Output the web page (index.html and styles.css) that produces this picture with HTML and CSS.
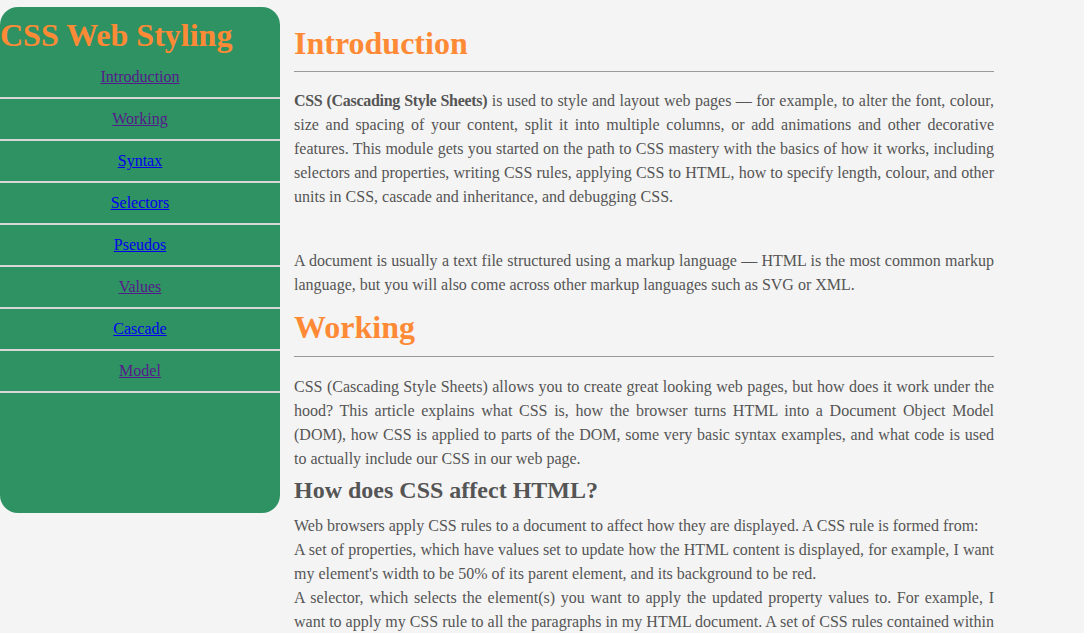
FILE: index.html
```html
<!DOCTYPE html>
<html lang="en">
<head>
<meta charset="utf-8">
<title>CSS Web Styling</title>
<link rel="stylesheet" href="styles.css">
</head>
<body>
<div class="page">
  <nav class="sidebar">
    <h1 class="brand">CSS Web Styling</h1>
    <ul class="nav">
      <li><a class="visited" href="#introduction">Introduction</a></li>
      <li><a class="visited" href="#working">Working</a></li>
      <li><a href="#syntax">Syntax</a></li>
      <li><a href="#selectors">Selectors</a></li>
      <li><a href="#pseudos">Pseudos</a></li>
      <li><a class="visited" href="#values">Values</a></li>
      <li><a href="#cascade">Cascade</a></li>
      <li><a class="visited" href="#model">Model</a></li>
    </ul>
  </nav>
  <main class="content">
    <section class="section" id="introduction">
      <h1 class="title">Introduction</h1>
      <hr class="rule">
      <p class="text text-tight"><strong>CSS (Cascading Style Sheets)</strong> is used to style and layout web pages — for example, to alter the font, colour, size and spacing of your content, split it into multiple columns, or add animations and other decorative features. This module gets you started on the path to CSS mastery with the basics of how it works, including selectors and properties, writing CSS rules, applying CSS to HTML, how to specify length, colour, and other units in CSS, cascade and inheritance, and debugging CSS.</p>
      <p class="text text-spaced">A document is usually a text file structured using a markup language — HTML is the most common markup language, but you will also come across other markup languages such as SVG or XML.</p>
    </section>
    <section class="section" id="working">
      <h1 class="title">Working</h1>
      <hr class="rule">
      <p class="text">CSS (Cascading Style Sheets) allows you to create great looking web pages, but how does it work under the hood? This article explains what CSS is, how the browser turns HTML into a Document Object Model (DOM), how CSS is applied to parts of the DOM, some very basic syntax examples, and what code is used to actually include our CSS in our web page.</p>
      <h2 class="subtitle">How does CSS affect HTML?</h2>
      <p class="text">Web browsers apply CSS rules to a document to affect how they are displayed. A CSS rule is formed from:<br>A set of properties, which have values set to update how the HTML content is displayed, for example, I want my element's width to be 50% of its parent element, and its background to be red.<br>A selector, which selects the element(s) you want to apply the updated property values to. For example, I want to apply my CSS rule to all the paragraphs in my HTML document. A set of CSS rules contained within a stylesheet determines how a webpage should look.</p>
    </section>
  </main>
</div>
</body>
</html>
```

FILE: styles.css
```css
html, body {
  margin: 0;
  padding: 0;
}

body {
  background: #f4f4f4;
  font-family: "Liberation Serif", "Times New Roman", serif;
  color: #555555;
  overflow: hidden;
}

.page {
  display: flex;
  align-items: flex-start;
  gap: 14px;
}

.sidebar {
  flex: 0 0 280px;
  width: 280px;
  height: 506px;
  margin-top: 7px;
  background: #2f9262;
  border-radius: 18px;
  box-sizing: border-box;
  padding-top: 10px;
}

.brand {
  margin: 0 0 3px 0;
  font-size: 32px;
  line-height: 37px;
  font-weight: bold;
  color: #ff8a36;
  white-space: nowrap;
}

.nav {
  list-style: none;
  margin: 0;
  padding: 0;
}

.nav li {
  height: 40px;
  display: flex;
  align-items: center;
  justify-content: center;
  border-bottom: 2px solid #d8d8d8;
}

.nav a {
  font-size: 16px;
  color: #0000ee;
  text-decoration: underline;
}

.nav a.visited {
  color: #551a8b;
}

.content {
  flex: 0 0 700px;
  width: 700px;
  padding-top: 25px;
}

.title {
  margin: 0;
  font-size: 32px;
  line-height: 37px;
  font-weight: bold;
  color: #ff8a36;
}

.rule {
  margin: 9px 0 17px 0;
  border: 0;
  border-top: 1px solid #9a9a9a;
  height: 0;
}

.section + .section {
  margin-top: 12px;
}

.section + .section .rule {
  margin: 10px 0 18px 0;
}

.text {
  margin: 0;
  font-size: 16px;
  line-height: 24px;
  text-align: justify;
}

.text-tight::first-line {
  word-spacing: -1px;
}

.text-tight strong {
  letter-spacing: -0.3px;
}

.text-spaced {
  margin-top: 40px;
}

.subtitle {
  margin: 5px 0 10px 0;
  font-size: 24px;
  line-height: 28px;
  font-weight: bold;
  color: #555555;
}
```
